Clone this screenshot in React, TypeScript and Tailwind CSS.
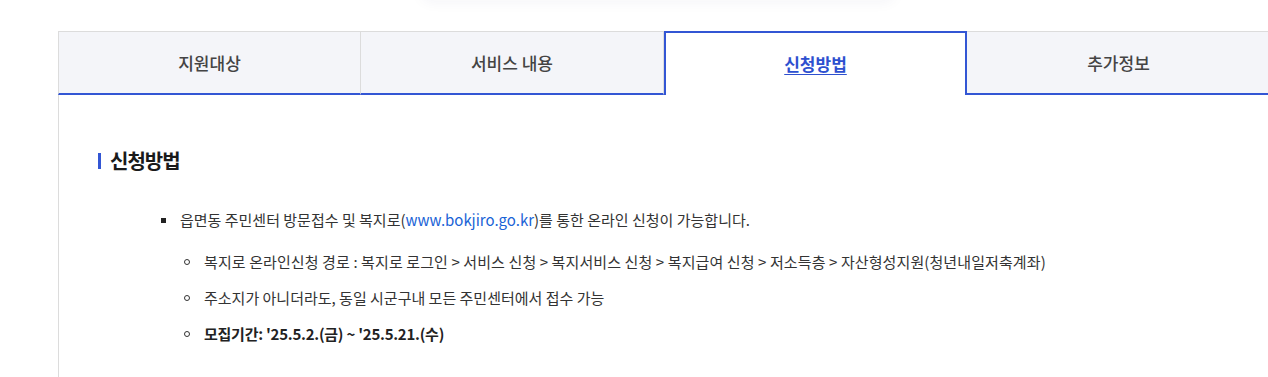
import React from 'react';

const tabs = ['지원대상', '서비스 내용', '신청방법', '추가정보'];

export default function App() {
  const active = 2;

  return (
    <div className="w-full h-[377px] overflow-hidden bg-white font-['Noto_Sans_CJK_KR','Noto_Sans',sans-serif]">
      {/* 위쪽 요소의 그림자 */}
      <div className="ml-[420px] w-[476px] h-[12px] -mt-[12px] bg-white shadow-[0_2px_14px_rgba(30,40,90,0.05)] rounded-b-[12px]" />

      <div className="ml-[58px] w-[1212px] mt-[31px]">
        <div className="grid grid-cols-4">
          {tabs.map((label, i) => {
            if (i === active) {
              return (
                <div
                  key={label}
                  className="h-[64px] bg-white border-2 border-b-0 border-[#3356d4] flex items-center justify-center"
                >
                  <span className="text-[17px] font-bold text-[#2e50cf] underline underline-offset-[3px]">
                    {label}
                  </span>
                </div>
              );
            }
            return (
              <div
                key={label}
                className={
                  'h-[64px] bg-[#f4f5f9] border-t border-t-[#dcdcdc] border-b-2 border-b-[#3356d4] flex items-center justify-center ' +
                  (i === 0 ? 'border-l border-l-[#dcdcdc] border-r border-r-[#dcdcdc]' : '') +
                  (i === 1 ? 'border-r border-r-[#dcdcdc]' : '')
                }
              >
                <span className="text-[17px] font-medium text-[#444]">{label}</span>
              </div>
            );
          })}
        </div>

        <div className="border-l border-[#dcdcdc] pl-[39px] pt-[53px] h-[300px]">
          <div className="flex items-center h-[26px]">
            <span className="w-[3px] h-[16px] bg-[#3356d4]" />
            <h2 className="ml-[9px] text-[20px] font-bold tracking-[-1px] text-[#1a1a1a] leading-[26px]">
              신청방법
            </h2>
          </div>

          <ul className="mt-[34px] ml-[63px] text-[15px] text-[#333] leading-[24px]">
            <li>
              <div className="flex items-center">
                <span className="w-[5px] h-[5px] bg-[#222] mr-[14px] shrink-0" />
                <span>
                  읍면동 주민센터 방문접수 및 복지로(
                  <span className="text-[#1a63d6]">www.bokjiro.go.kr</span>)를 통한 온라인 신청이 가능합니다.
                </span>
              </div>
              <ul className="mt-[18px] ml-[23px] flex flex-col gap-[12px]">
                <li className="flex items-center">
                  <span className="w-[6px] h-[6px] rounded-full border border-[#333] mr-[14px] shrink-0" />
                  <span className="tracking-[0.1px]">
                    복지로 온라인신청 경로 : 복지로 로그인 &gt; 서비스 신청 &gt; 복지서비스 신청 &gt; 복지급여 신청 &gt; 저소득층 &gt; 자산형성지원(청년내일저축계좌)
                  </span>
                </li>
                <li className="flex items-center">
                  <span className="w-[6px] h-[6px] rounded-full border border-[#333] mr-[14px] shrink-0" />
                  <span>주소지가 아니더라도, 동일 시군구내 모든 주민센터에서 접수 가능</span>
                </li>
                <li className="flex items-center">
                  <span className="w-[6px] h-[6px] rounded-full border border-[#333] mr-[14px] shrink-0" />
                  <span className="font-bold tracking-[-0.25px] text-[#222]">모집기간: '25.5.2.(금) ~ '25.5.21.(수)</span>
                </li>
              </ul>
            </li>
          </ul>
        </div>
      </div>
    </div>
  );
}
